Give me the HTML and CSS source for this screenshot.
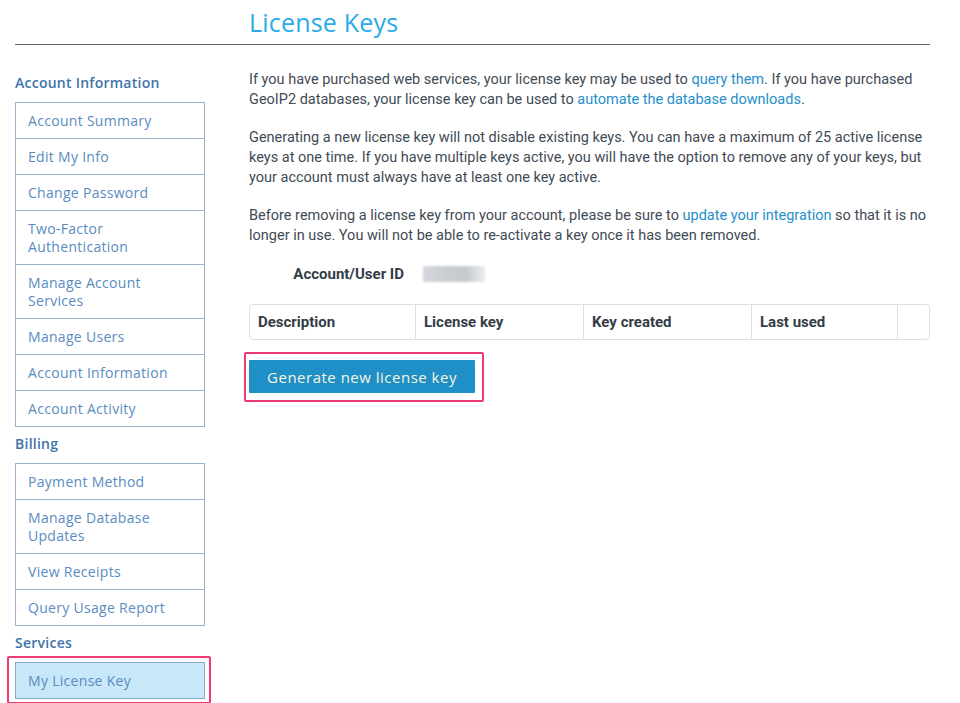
FILE: index.html
```html
<!DOCTYPE html>
<html lang="en">
<head>
<meta charset="utf-8">
<title>License Keys</title>
<link rel="stylesheet" href="styles.css">
</head>
<body>
<div class="page">
  <header class="header">
    <div></div>
    <h1 class="title">License Keys</h1>
  </header>
  <div class="layout">
    <aside class="sidebar">
      <h3 class="side-head">Account Information</h3>
      <ul class="nav">
        <li>Account Summary</li>
        <li>Edit My Info</li>
        <li>Change Password</li>
        <li>Two-Factor<br>Authentication</li>
        <li>Manage Account<br>Services</li>
        <li>Manage Users</li>
        <li>Account Information</li>
        <li>Account Activity</li>
      </ul>
      <h3 class="side-head">Billing</h3>
      <ul class="nav">
        <li>Payment Method</li>
        <li>Manage Database<br>Updates</li>
        <li>View Receipts</li>
        <li>Query Usage Report</li>
      </ul>
      <h3 class="side-head side-head-tight">Services</h3>
      <div class="annot-side">
        <ul class="nav nav-active">
          <li>My License Key</li>
        </ul>
      </div>
    </aside>
    <main class="main">
      <p>If you have purchased web services, your license key may be used to <a href="#">query them</a>. If you have purchased GeoIP2 databases, your license key can be used to <a href="#">automate the database downloads</a>.</p>
      <p>Generating a new license key will not disable existing keys. You can have a maximum of 25 active license keys at one time. If you have multiple keys active, you will have the option to remove any of your keys, but your account must always have at least one key active.</p>
      <p>Before removing a license key from your account, please be sure to <a href="#">update your integration</a> so that it is no longer in use. You will not be able to re-activate a key once it has been removed.</p>
      <div class="idrow">
        <span class="idlabel">Account/User ID</span>
        <span class="idblur"></span>
      </div>
      <table class="keys">
        <thead>
          <tr>
            <th class="c1">Description</th>
            <th class="c2">License key</th>
            <th class="c3">Key created</th>
            <th class="c4">Last used</th>
            <th class="c5"></th>
          </tr>
        </thead>
      </table>
      <div class="annot-btn">
        <button class="btn">Generate new license key</button>
      </div>
    </main>
  </div>
</div>
</body>
</html>
```

FILE: styles.css
```css
* { box-sizing: border-box; }
html, body { margin: 0; padding: 0; background: #fff; }
body { font-family: "Open Sans", "Liberation Sans", sans-serif; }

.page { padding: 0 30px 0 15px; }

.header {
  display: grid;
  grid-template-columns: 190px 1fr;
  column-gap: 44px;
  padding-top: 6px;
  border-bottom: 1px solid #5f6b75;
  height: 45px;
}
.title {
  margin: 0;
  font-family: "Open Sans", sans-serif;
  font-weight: 500;
  font-size: 25px;
  line-height: 32px;
  color: #2aaae9;
  letter-spacing: 0.2px;
}

.layout {
  display: grid;
  grid-template-columns: 190px 1fr;
  column-gap: 44px;
}

.sidebar { padding-top: 28px; }
.side-head {
  margin: 0 0 9px;
  font-size: 14px;
  line-height: 20px;
  font-weight: 600;
  color: #3e74ab;
  letter-spacing: 0.25px;
}
.side-head-tight { margin-bottom: 3px; }
.nav {
  list-style: none;
  margin: 0 0 7px;
  padding: 0;
  border: 1px solid #9cb2cd;
  border-top: 0;
}
.nav li {
  border-top: 1px solid #9cb2cd;
  padding: 8.5px 12px;
  font-size: 14px;
  line-height: 18px;
  color: #5a8bc1;
  letter-spacing: 0.3px;
}
.annot-side {
  margin: 0 0 0 -8px;
  width: 204px;
  border: 2px solid #ef3b72;
  padding: 4px 4px 3px 6px;
  border-radius: 2px;
}
.nav-active { margin: 0; border-color: #8aa8c8; }
.nav-active li { background: #c8e7f9; border-top: 1px solid #8aa8c8; }

.main {
  padding-top: 25px;
  font-family: Roboto, "Liberation Sans", sans-serif;
  font-size: 14.5px;
  line-height: 20px;
  color: #414b55;
}
.main p { margin: 0 0 18px; }
.main a { color: #2590c9; text-decoration: none; }

.idrow {
  display: grid;
  grid-template-columns: 155px auto;
  column-gap: 19px;
  align-items: center;
  height: 20px;
}
.idlabel {
  text-align: right;
  font-weight: 700;
  color: #343d47;
  font-size: 15px;
}
.idblur {
  width: 62px;
  height: 16px;
  background: linear-gradient(90deg, #d4d8dc 0, #c9cdd2 40%, #c6cace 70%, #eceef0 100%);
  filter: blur(1px);
}

.keys {
  margin-top: 20px;
  width: 100%;
  border-collapse: separate;
  border-spacing: 0;
  border: 1px solid #dcdfe2;
  border-radius: 4px;
  table-layout: fixed;
}
.keys th {
  height: 34px;
  padding: 0 8px;
  text-align: left;
  font-weight: 700;
  font-size: 15px;
  color: #343d47;
  border-left: 1px solid #dcdfe2;
}
.keys th.c1 { border-left: 0; width: 165px; }
.keys th.c2 { width: 168px; }
.keys th.c3 { width: 168px; }
.keys th.c4 { width: 146px; }

.annot-btn {
  display: inline-block;
  margin: 12px 0 0 -5px;
  border: 2px solid #ef3b72;
  padding: 6px 7px 7px 3px;
  border-radius: 2px;
}
.btn {
  display: block;
  width: 226px;
  height: 33px;
  border: 0;
  border-radius: 1px;
  background: #1e8fc7;
  color: #f8f4df;
  font-family: "Open Sans", sans-serif;
  font-size: 15px;
  font-weight: 500;
  letter-spacing: 0.5px;
  padding: 0;
  cursor: pointer;
}
```
